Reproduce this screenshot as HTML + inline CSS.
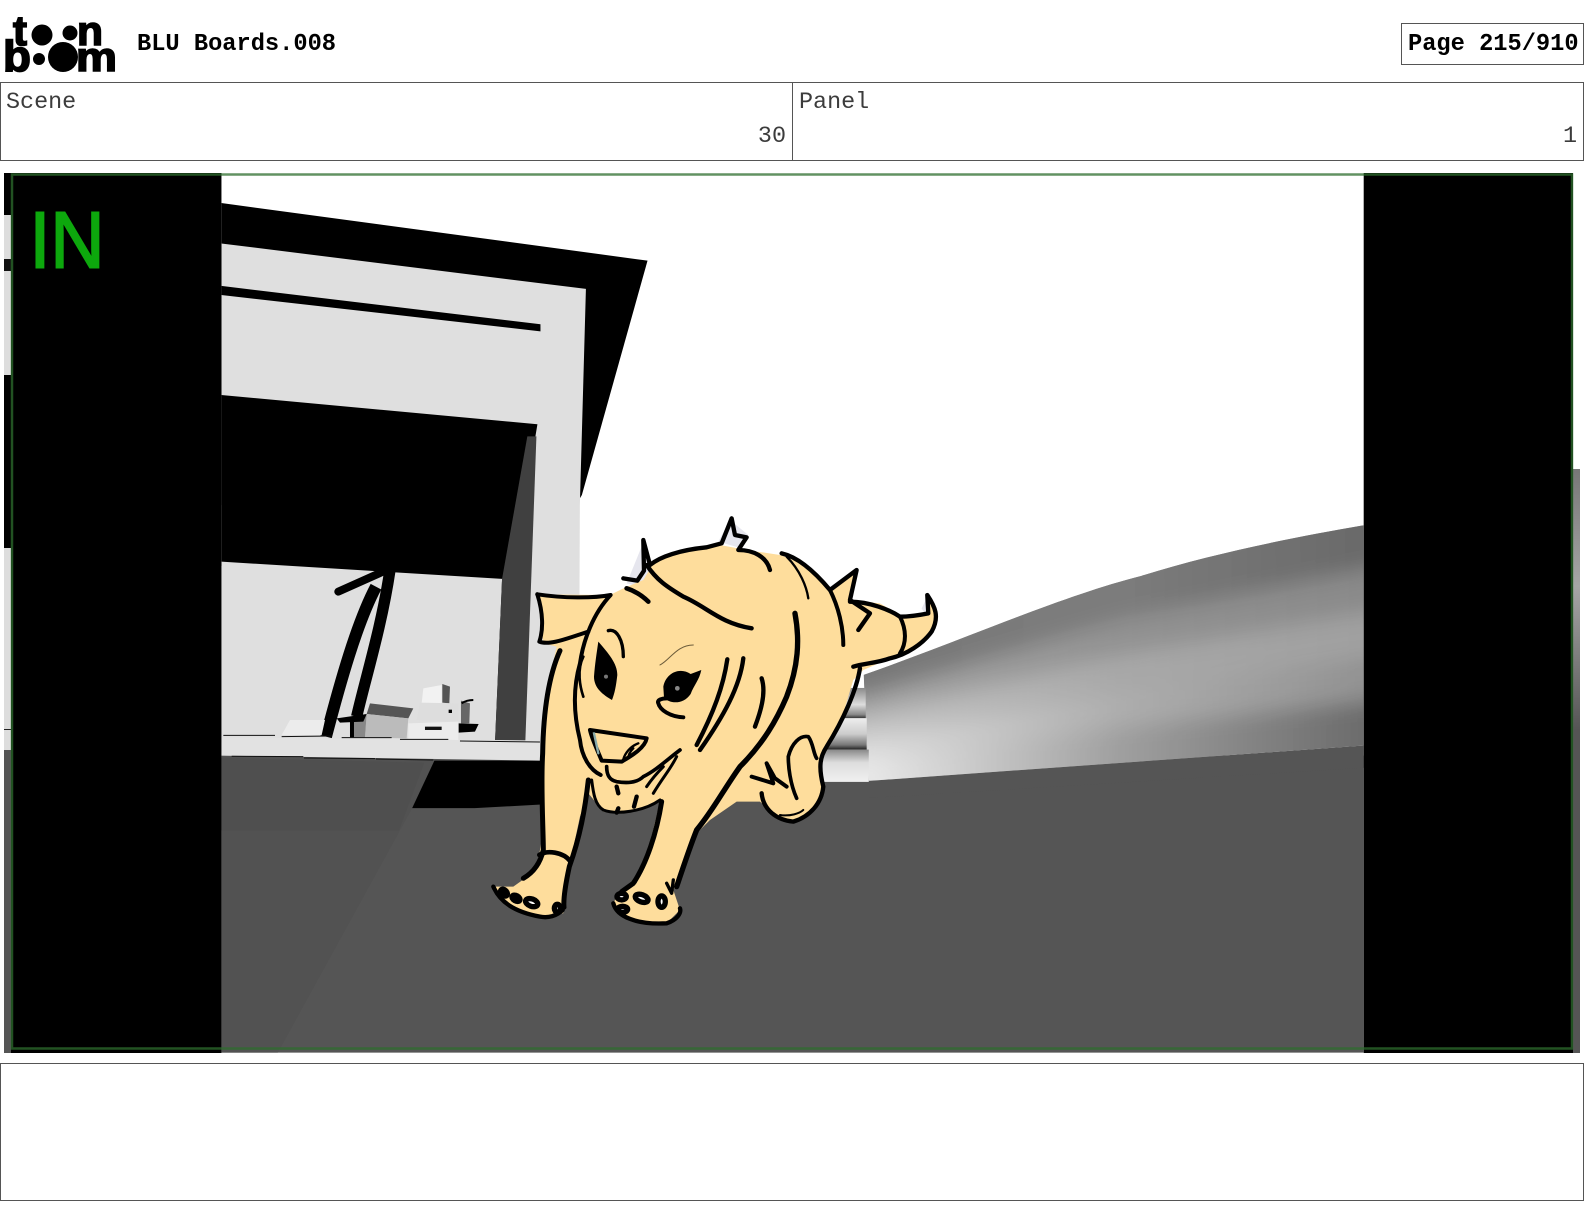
<!DOCTYPE html>
<html>
<head>
<meta charset="utf-8">
<title>BLU Boards.008</title>
<style>
html,body{margin:0;padding:0;background:#fff;}
body{position:relative;width:1584px;height:1224px;overflow:hidden;font-family:"Liberation Mono",monospace;color:#3c3c3c;}
.box{position:absolute;box-sizing:border-box;border:1px solid #555;background:#fff;}
.t{position:absolute;font-size:23.4px;line-height:26px;white-space:pre;}
.b{font-weight:bold;color:#000;font-size:23.7px;}
</style>
</head>
<body>
<div class="box" style="left:0;top:82px;width:793px;height:79px;"></div>
<div class="box" style="left:792px;top:82px;width:792px;height:79px;"></div>
<div class="box" style="left:1401px;top:23px;width:183px;height:42px;"></div>
<div class="box" style="left:0;top:1063px;width:1584px;height:138px;"></div>
<div class="t b" style="left:137px;top:32px;">BLU Boards.008</div>
<div class="t b" style="left:1408px;top:32px;">Page 215/910</div>
<div class="t" style="left:6px;top:90px;">Scene</div>
<div class="t" style="left:799px;top:90px;">Panel</div>
<div class="t" style="right:798px;top:124px;">30</div>
<div class="t" style="right:7px;top:124px;">1</div>

<svg width="1584" height="1224" viewBox="0 0 1584 1224" style="position:absolute;left:0;top:0;">
<defs>
<linearGradient id="w0" gradientUnits="userSpaceOnUse" x1="860" y1="0" x2="1350" y2="0"><stop offset="0" stop-color="#787878"/><stop offset=".5" stop-color="#7c7c7c"/><stop offset="1" stop-color="#6a6a6a"/></linearGradient>
<linearGradient id="w1" gradientUnits="userSpaceOnUse" x1="860" y1="0" x2="1350" y2="0"><stop offset="0" stop-color="#a4a4a4"/><stop offset=".5" stop-color="#929292"/><stop offset="1" stop-color="#8a8a8a"/></linearGradient>
<linearGradient id="w2" gradientUnits="userSpaceOnUse" x1="860" y1="0" x2="1350" y2="0"><stop offset="0" stop-color="#c4c4c4"/><stop offset=".5" stop-color="#a8a8a8"/><stop offset="1" stop-color="#a0a0a0"/></linearGradient>
<linearGradient id="w3" gradientUnits="userSpaceOnUse" x1="860" y1="0" x2="1350" y2="0"><stop offset="0" stop-color="#dcdcdc"/><stop offset=".5" stop-color="#aeaeae"/><stop offset="1" stop-color="#929292"/></linearGradient>
<linearGradient id="w4" gradientUnits="userSpaceOnUse" x1="860" y1="0" x2="1350" y2="0"><stop offset="0" stop-color="#e8e8e8"/><stop offset=".5" stop-color="#a0a0a0"/><stop offset="1" stop-color="#6c6c6c"/></linearGradient>
<linearGradient id="b1" x1="0" y1="0" x2="0" y2="1">
<stop offset="0" stop-color="#8a8a8a"/><stop offset="0.55" stop-color="#ddd"/><stop offset="0.88" stop-color="#888"/><stop offset="1" stop-color="#333"/>
</linearGradient>
<linearGradient id="b2" x1="0" y1="0" x2="0" y2="1">
<stop offset="0" stop-color="#eee"/><stop offset="0.5" stop-color="#ccc"/><stop offset="0.85" stop-color="#777"/><stop offset="1" stop-color="#222"/>
</linearGradient>
<linearGradient id="b3" x1="0" y1="0" x2="0" y2="1">
<stop offset="0" stop-color="#888"/><stop offset="0.4" stop-color="#ddd"/><stop offset="1" stop-color="#f0f0f0"/>
</linearGradient>
<linearGradient id="rs" x1="0" y1="0" x2="0" y2="1">
<stop offset="0" stop-color="#777"/><stop offset="0.45" stop-color="#a5a5a5"/><stop offset="1" stop-color="#555"/>
</linearGradient>
<filter id="bl" filterUnits="userSpaceOnUse" x="700" y="400" width="800" height="500"><feGaussianBlur stdDeviation="10"/></filter>
<clipPath id="wc"><path d="M855 668 C950 635 1050 590 1130 570 C1200 548 1280 532 1350 520 L1350 738 L860 773 Z"/></clipPath>
</defs>

<!-- logo -->
<g fill="#000" stroke="#000" stroke-width="1.6" font-family="'Liberation Sans',sans-serif" font-weight="bold">
<text x="13" y="45" font-size="42">t</text>
<text x="77" y="45" font-size="41" textLength="26" lengthAdjust="spacingAndGlyphs">n</text>
<text x="3" y="71" font-size="44" textLength="28" lengthAdjust="spacingAndGlyphs">b</text>
<text x="76" y="71" font-size="41" textLength="41" lengthAdjust="spacingAndGlyphs">m</text>
<circle cx="42" cy="35" r="10.5" stroke="none"/><circle cx="70" cy="33" r="7.5" stroke="none"/>
<circle cx="39" cy="59" r="6" stroke="none"/><circle cx="63" cy="57" r="15" stroke="none"/>
</g>

<!-- left strip -->
<rect x="4" y="173" width="8" height="42" fill="#000"/>
<rect x="4" y="215" width="8" height="44" fill="#ddd"/>
<rect x="4" y="259" width="8" height="12" fill="#111"/>
<rect x="4" y="271" width="8" height="104" fill="#ddd"/>
<rect x="4" y="375" width="8" height="173" fill="#000"/>
<rect x="4" y="548" width="8" height="202" fill="#ddd"/>
<rect x="4" y="729" width="8" height="1" fill="#222"/>
<rect x="4" y="750" width="8" height="303" fill="#555"/>
<!-- right strip -->
<rect x="1573" y="469" width="7" height="261" fill="url(#rs)"/>
<rect x="1573" y="730" width="7" height="323" fill="#555"/>

<!-- scene -->
<g transform="scale(1.0102)">
<rect x="219" y="171" width="1131" height="871" fill="#fff"/>
<polygon points="219,201 641,258 576,490 570,500 219,500" fill="#000"/>
<polygon points="219,241 580,286 574,500 573,745 219,745" fill="#dfdfdf"/>
<polygon points="219,283 535,321 535,328 219,292" fill="#000"/>
<polygon points="219,391 532,420 530,432 522,600 490,735 219,560" fill="#000"/>
<polygon points="219,556 497,573 490,735 219,735" fill="#dfdfdf"/>
<polygon points="522,432 531,432 520,735 490,735 497,573" fill="#404040"/>
<rect x="219" y="748" width="1131" height="294" fill="#555"/>
<polygon points="860,773 1350,738 1350,760 860,790" fill="#555"/>
<polygon points="219,748 430,753 408,800 275,1042 219,1042" fill="#525252"/>
<polygon points="219,750 420,755 395,822 219,822" fill="#4f4f4f"/>
<polygon points="430,753 560,753 560,795 470,800 408,800" fill="#000"/>
<polygon points="219,730 535,733 535,753 219,748" fill="#e2e2e2"/>
<!-- wedge -->
<g clip-path="url(#wc)">
<rect x="840" y="500" width="520" height="290" fill="#999"/>
<g filter="url(#bl)">
<polygon points="780,630 860,640 1110,550 1350,490 1420,480 1420,564 1350,564 1110,613 860,688 780,700" fill="url(#w0)"/>
<polygon points="780,700 860,688 1110,613 1350,564 1420,550 1420,607 1350,607 1110,648 860,709 780,720" fill="url(#w1)"/>
<polygon points="780,720 860,709 1110,648 1350,607 1420,600 1420,651 1350,651 1110,684 860,731 780,740" fill="url(#w2)"/>
<polygon points="780,740 860,731 1110,684 1350,651 1420,645 1420,694 1350,694 1110,719 860,752 780,760" fill="url(#w3)"/>
<polygon points="780,760 860,752 1110,719 1350,694 1420,690 1420,790 780,810" fill="url(#w4)"/>
</g>
</g>
<rect x="800" y="681" width="57" height="30" fill="url(#b1)"/>
<rect x="800" y="711" width="58" height="31" fill="url(#b2)"/>
<rect x="800" y="742" width="60" height="32" fill="url(#b3)"/>
</g>

<!-- small objects, zoom coordinates -->
<g transform="translate(200 540) scale(.3333)">
<path d="M415 155 L560 90" stroke="#000" stroke-width="24" stroke-linecap="round" fill="none"/>
<path d="M528 140 C470 250 420 430 378 590" stroke="#000" stroke-width="36" fill="none"/>
<path d="M570 90 C545 260 495 420 470 530" stroke="#000" stroke-width="34" fill="none"/>
<polygon points="510,490 640,505 625,535 500,522" fill="#555"/>
<polygon points="500,522 625,535 620,595 495,592" fill="#bbb"/>
<polygon points="460,545 500,522 495,592 460,592" fill="#888"/>
<polygon points="410,535 500,522 490,545 420,548" fill="#000"/>
<rect x="450" y="545" width="12" height="47" fill="#000"/>
<polygon points="670,445 725,435 725,490 665,490" fill="#f2f2f2"/>
<polygon points="727,432 750,440 748,490 727,488" fill="#555"/>
<polygon points="660,488 775,490 775,545 650,540" fill="#ddd"/>
<polygon points="625,550 775,545 775,600 625,597" fill="#ececec"/>
<rect x="675" y="560" width="50" height="10" fill="#111"/>
<rect x="746" y="509" width="10" height="10" fill="#000"/>
<polygon points="783,482 810,490 808,550 783,550" fill="#666"/>
<path d="M785 490 Q800 480 820 480" stroke="#000" stroke-width="6" fill="none"/>
<polygon points="776,550 836,552 825,575 776,578" fill="#000"/>
<polygon points="270,540 375,540 365,585 245,585" fill="#ececec"/>
<path d="M70 586 L225 586 M245 590 L395 588 M425 593 L575 593 M600 598 L745 598 M780 603 L1020 606" stroke="#111" stroke-width="3" fill="none"/>
<path d="M95 649 L310 650 M312 654 L525 656 M528 657 L700 660" stroke="#111" stroke-width="3" fill="none"/>
</g>

<!-- black side panels -->
<rect x="11" y="173" width="210" height="880" fill="#000"/>
<rect x="1364" y="173" width="209" height="880" fill="#000"/>
<rect x="221" y="173" width="1" height="880" fill="#000" fill-opacity=".45"/>
<rect x="1363" y="173" width="1" height="880" fill="#000" fill-opacity=".3"/>

<!-- dog, zoom coordinates -->
<g transform="translate(480 500) scale(.3333)">
<g fill="#e6e6ee">
<polygon points="440,250 485,140 520,190 480,260"/>
<polygon points="715,125 750,60 805,105 785,145"/>
<polygon points="1050,260 1125,210 1120,290"/>
<polygon points="1325,325 1345,285 1370,335 1340,350"/>
</g>
<path d="M172 283 L390 285 L430 265 L490 240 L520 190 L600 150 L720 135 L800 150 L900 165 L980 195 L1050 270 L1130 215 L1110 300 L1200 310 L1260 345 L1340 340 L1345 290 L1370 340 L1355 400 L1300 450 L1230 475 L1150 510 L1120 540 L1090 640 L1040 740 L1020 770 L1030 860 L1010 920 L950 965 L890 950 L840 905 L770 905 L690 960 L650 1000 L610 1110 L580 1170 L600 1230 L560 1270 L480 1270 L420 1240 L400 1210 L420 1170 L470 1150 L510 1030 L540 905 L500 925 L420 940 L370 935 L325 880 L300 950 L270 1090 L250 1170 L250 1240 L180 1250 L100 1230 L40 1160 L100 1160 L170 1110 L190 990 L180 820 L190 620 L230 440 L190 430 Z" fill="#fedd9c"/>
<g fill="none" stroke="#000" stroke-width="12" stroke-linecap="round" stroke-linejoin="round">
<path d="M172 283 C190 340 190 390 178 425 C210 438 270 412 325 395"/>
<path d="M172 283 C250 295 340 295 392 285 C340 340 310 420 300 490 C280 560 280 640 300 720 C305 770 330 810 362 825"/>
<path d="M240 452 C205 530 190 640 188 760 C182 860 190 990 190 1050 C182 1085 165 1115 130 1135" stroke-width="15"/>
<path d="M178 1065 C200 1050 250 1055 272 1085" stroke-width="14"/>
<path d="M325 840 C315 930 300 1010 268 1100 C255 1160 250 1200 252 1222" stroke-width="15"/>
<path d="M40 1160 C60 1205 100 1235 180 1250 C205 1255 230 1248 248 1230" stroke-width="13"/>
<path d="M430 235 L472 242 L492 212 L490 120 L510 195 C540 170 600 150 680 142 L725 130 L755 55 L765 105 L800 112 L775 150 C820 150 860 170 870 210" stroke-width="13"/>
<path d="M500 195 C530 240 560 260 610 290 C680 320 720 370 815 385" stroke-width="13"/>
<path d="M440 265 C470 275 490 290 505 305" stroke-width="14"/>
<path d="M905 160 C950 170 1000 210 1050 270 L1130 210 L1110 300 L1170 340 L1135 390" stroke-width="13"/>
<path d="M1050 270 C1075 320 1090 380 1090 435"/>
<path d="M1110 305 C1170 305 1230 330 1260 350 C1290 350 1320 345 1345 340 L1342 285 C1365 320 1380 350 1355 395 C1330 430 1280 465 1230 475 C1190 490 1150 490 1120 500" stroke-width="13"/>
<path d="M1260 350 C1280 390 1280 430 1260 460"/>
<path d="M945 340 C960 420 955 500 920 590 C890 660 850 730 780 800 C730 870 700 930 650 990 C630 1040 610 1100 590 1160" stroke-width="16"/>
<path d="M920 170 C960 210 980 260 985 295" stroke-width="7"/>
<path d="M1140 505 C1130 570 1090 660 1040 740 C1020 770 1015 800 1030 860 C1025 910 990 950 940 965 C890 960 850 930 845 880" stroke-width="13"/>
<path d="M925 770 C935 730 960 705 985 710 C1000 730 1000 760 1010 775 M925 770 C925 800 930 850 950 895" stroke-width="11"/>
<path d="M815 830 L880 850 L860 790 L885 835 L920 860" stroke-width="12"/>
<path d="M900 945 C930 950 960 940 970 930" stroke-width="6"/>
<path d="M742 478 C730 560 700 640 650 735 M790 475 C780 560 730 650 660 750 M845 535 C860 580 840 640 825 680" stroke-width="13"/>
<path d="M330 690 L500 715 C495 745 450 770 425 785 L365 782 C350 745 335 715 330 690 Z" stroke-width="12"/>
<path d="M475 730 C450 740 435 760 430 778 M460 745 C450 755 445 765 445 775" stroke-width="7"/>
<path d="M342 700 L355 760" stroke="#8aa" stroke-width="7"/>
<path d="M380 800 C380 820 385 840 410 845 C440 850 470 850 490 830 C530 810 560 780 600 750" stroke-width="11"/>
<path d="M335 840 C340 880 345 915 370 930 C410 945 490 935 540 900 M520 880 C550 830 570 810 590 770 M500 860 C520 830 535 815 550 800" stroke-width="9"/>
<path d="M410 860 L415 880 M470 890 L462 920 M415 925 L410 938" stroke-width="13"/>
<path d="M385 392 C410 385 430 420 430 470" stroke-width="10"/>
<path d="M535 610 C540 630 570 650 610 652 M535 610 C530 600 545 595 560 595" stroke-width="12"/>
<path d="M540 495 C570 480 590 435 640 435" stroke="#6b5b3a" stroke-width="3"/>
<path d="M310 470 C290 510 300 560 310 590" stroke-width="8"/>
<path d="M545 905 C530 1000 500 1090 460 1150 L425 1175" stroke-width="15"/>
<path d="M400 1210 C410 1250 470 1275 560 1270 C590 1260 605 1240 600 1225" stroke-width="13"/>
<path d="M560 1150 L575 1180 L580 1140" stroke-width="10"/>
</g>
<!-- eyes -->
<path d="M355 425 C385 460 412 490 412 525 C408 560 404 580 396 600 C370 585 342 565 342 530 C345 490 350 460 355 425 Z" fill="#000"/>
<circle cx="378" cy="530" r="6" fill="#777"/>
<path d="M550 560 C558 518 600 500 632 522 L664 510 C658 540 642 555 632 582 C610 615 568 612 552 592 Z" fill="#000"/>
<circle cx="592" cy="565" r="7" fill="#888"/>
<!-- toes -->
<g fill="#fff" stroke="#000" stroke-width="16">
<ellipse cx="72" cy="1178" rx="12" ry="8" transform="rotate(45 72 1178)"/>
<ellipse cx="108" cy="1195" rx="13" ry="8" transform="rotate(30 108 1195)"/>
<ellipse cx="155" cy="1208" rx="19" ry="11" transform="rotate(20 155 1208)"/>
<ellipse cx="232" cy="1225" rx="9" ry="12"/>
<ellipse cx="425" cy="1190" rx="14" ry="10"/>
<ellipse cx="428" cy="1228" rx="15" ry="9"/>
<ellipse cx="485" cy="1195" rx="20" ry="11" transform="rotate(20 485 1195)"/>
<ellipse cx="545" cy="1205" rx="11" ry="17"/>
</g>
</g>

<!-- IN -->
<text x="29.500" y="267.500" font-family="'Liberation Sans',sans-serif" font-size="80" textLength="75" lengthAdjust="spacingAndGlyphs" fill="#0da80d" stroke="#0da80d" stroke-width="2">IN</text>

<!-- green frame -->
<rect x="12" y="174.500" width="1560" height="874" fill="none" stroke="#2e6e2e" stroke-opacity=".75" stroke-width="2.500"/>
</svg>
</body>
</html>
